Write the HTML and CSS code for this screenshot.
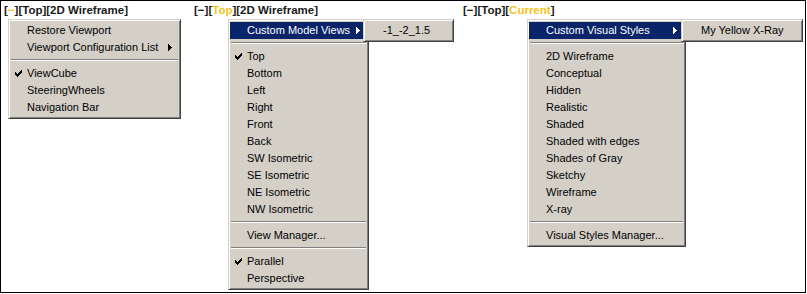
FILE: index.html
```html
<!DOCTYPE html>
<html>
<head>
<meta charset="utf-8">
<link rel="stylesheet" href="styles.css">
</head>
<body>
<div class="frame">
  <div class="pane pane-1">
    <div class="title">[<span class="hl">−</span>][Top][2D Wireframe]</div>
    <div class="menu menu-1">
      <div class="item">Restore Viewport</div>
      <div class="item">Viewport Configuration List<svg class="arrow" width="4" height="7" viewBox="0 0 4 7"><rect x="0" y="0" width="1" height="7"/><rect x="1" y="1" width="1" height="5"/><rect x="2" y="2" width="1" height="3"/><rect x="3" y="3" width="1" height="1"/></svg></div>
      <div class="sep"></div>
      <div class="item"><svg class="check" width="7" height="7" viewBox="0 0 7 7"><rect x="6" y="0" width="1" height="1"/><rect x="5" y="1" width="2" height="1"/><rect x="0" y="2" width="1" height="1"/><rect x="4" y="2" width="3" height="1"/><rect x="0" y="3" width="2" height="1"/><rect x="3" y="3" width="3" height="1"/><rect x="0" y="4" width="5" height="1"/><rect x="1" y="5" width="3" height="1"/><rect x="2" y="6" width="1" height="1"/></svg>ViewCube</div>
      <div class="item">SteeringWheels</div>
      <div class="item">Navigation Bar</div>
    </div>
  </div>
  <div class="pane pane-2">
    <div class="title">[−][<span class="hl">Top</span>][2D Wireframe]</div>
    <div class="menu menu-2">
      <div class="item active">Custom Model Views<svg class="arrow" width="4" height="7" viewBox="0 0 4 7"><rect x="0" y="0" width="1" height="7"/><rect x="1" y="1" width="1" height="5"/><rect x="2" y="2" width="1" height="3"/><rect x="3" y="3" width="1" height="1"/></svg></div>
      <div class="sep"></div>
      <div class="item"><svg class="check" width="7" height="7" viewBox="0 0 7 7"><rect x="6" y="0" width="1" height="1"/><rect x="5" y="1" width="2" height="1"/><rect x="0" y="2" width="1" height="1"/><rect x="4" y="2" width="3" height="1"/><rect x="0" y="3" width="2" height="1"/><rect x="3" y="3" width="3" height="1"/><rect x="0" y="4" width="5" height="1"/><rect x="1" y="5" width="3" height="1"/><rect x="2" y="6" width="1" height="1"/></svg>Top</div>
      <div class="item">Bottom</div>
      <div class="item">Left</div>
      <div class="item">Right</div>
      <div class="item">Front</div>
      <div class="item">Back</div>
      <div class="item">SW Isometric</div>
      <div class="item">SE Isometric</div>
      <div class="item">NE Isometric</div>
      <div class="item">NW Isometric</div>
      <div class="sep"></div>
      <div class="item">View Manager...</div>
      <div class="sep"></div>
      <div class="item"><svg class="check" width="7" height="7" viewBox="0 0 7 7"><rect x="6" y="0" width="1" height="1"/><rect x="5" y="1" width="2" height="1"/><rect x="0" y="2" width="1" height="1"/><rect x="4" y="2" width="3" height="1"/><rect x="0" y="3" width="2" height="1"/><rect x="3" y="3" width="3" height="1"/><rect x="0" y="4" width="5" height="1"/><rect x="1" y="5" width="3" height="1"/><rect x="2" y="6" width="1" height="1"/></svg>Parallel</div>
      <div class="item">Perspective</div>
      <div class="menu submenu submenu-2">
        <div class="item">-1_-2_1.5</div>
      </div>
    </div>
  </div>
  <div class="pane pane-3">
    <div class="title">[−][Top][<span class="hl">Current</span>]</div>
    <div class="menu menu-3">
      <div class="item active">Custom Visual Styles<svg class="arrow" width="4" height="7" viewBox="0 0 4 7"><rect x="0" y="0" width="1" height="7"/><rect x="1" y="1" width="1" height="5"/><rect x="2" y="2" width="1" height="3"/><rect x="3" y="3" width="1" height="1"/></svg></div>
      <div class="sep"></div>
      <div class="item">2D Wireframe</div>
      <div class="item">Conceptual</div>
      <div class="item">Hidden</div>
      <div class="item">Realistic</div>
      <div class="item">Shaded</div>
      <div class="item">Shaded with edges</div>
      <div class="item">Shades of Gray</div>
      <div class="item">Sketchy</div>
      <div class="item">Wireframe</div>
      <div class="item">X-ray</div>
      <div class="sep"></div>
      <div class="item">Visual Styles Manager...</div>
      <div class="menu submenu submenu-3">
        <div class="item">My Yellow X-Ray</div>
      </div>
    </div>
  </div>
</div>
</body>
</html>
```

FILE: styles.css
```css
html, body {
  margin: 0;
  padding: 0;
  background: #fff;
}

body {
  font-family: "Liberation Sans", Arial, sans-serif;
  font-size: 11px;
  color: #000;
}

.frame {
  width: 806px;
  height: 293px;
  box-sizing: border-box;
  border: 1px solid #000;
  display: flex;
  align-items: flex-start;
}

.pane {
  box-sizing: border-box;
  padding-left: 3px;
}

.pane-1 { width: 190px; }
.pane-2 { width: 269px; }
.pane-3 { flex: 1; }

.title {
  height: 18px;
  line-height: 19px;
  font-weight: bold;
  font-size: 11.5px;
  color: #1a1a1a;
  white-space: nowrap;
}

.hl {
  color: #f0c41c;
}

.menu {
  position: relative;
  box-sizing: border-box;
  background: #d4d0c8;
  border: 1px solid;
  border-color: #d4d0c8 #404040 #404040 #d4d0c8;
  box-shadow: inset 1px 1px #fff, inset -1px -1px #808080;
  padding: 2px 1px;
}

.menu-1 { width: 173px; margin-left: 4px; }
.menu-2 { width: 141px; margin-left: 34px; }
.menu-3 { width: 159px; margin-left: 64px; }

.item {
  position: relative;
  height: 17px;
  line-height: 17px;
  padding-left: 17px;
  white-space: nowrap;
}

.item.active {
  background: #0a246a;
  color: #fff;
}

.check {
  position: absolute;
  left: 5px;
  top: 5px;
  fill: #000;
}

.arrow {
  position: absolute;
  right: 7px;
  top: 5px;
  fill: currentColor;
}

.sep {
  height: 9px;
  position: relative;
}

.sep::before {
  content: "";
  position: absolute;
  left: 1px;
  right: 1px;
  top: 3px;
  border-top: 1px solid #808080;
  border-bottom: 1px solid #fff;
}

.submenu {
  position: absolute;
  top: -1px;
  z-index: 2;
}

.submenu .item {
  padding-left: 18px;
}

.submenu-2 { left: 134px; width: 91px; }
.submenu-3 { left: 153px; width: 122px; }
```
